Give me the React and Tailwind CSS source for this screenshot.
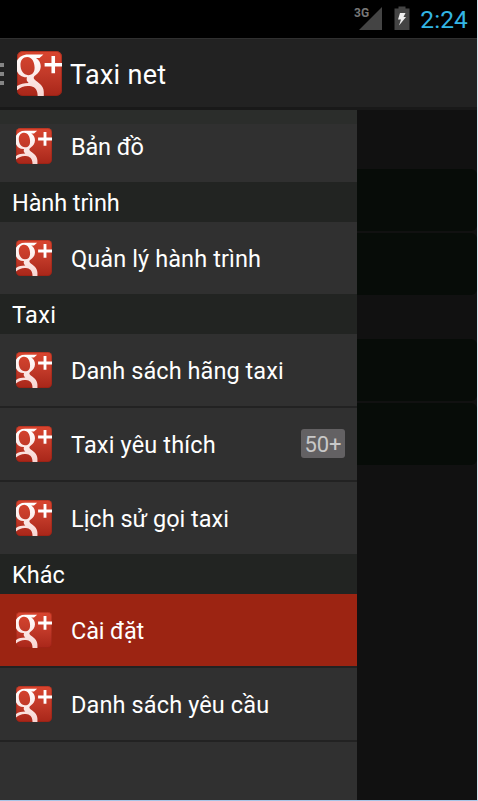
import { useId } from "react";

function GPlus({ className }) {
  const id = useId();
  return (
    <svg viewBox="0 0 44 44" className={className}>
      <defs>
        <linearGradient id={id} x1="0" y1="0" x2="0" y2="1">
          <stop offset="0" stopColor="#d9452f" />
          <stop offset="0.5" stopColor="#c23a29" />
          <stop offset="1" stopColor="#a82619" />
        </linearGradient>
        <linearGradient id={id + "w"} x1="0" y1="0" x2="0" y2="1">
          <stop offset="0" stopColor="#fff" />
          <stop offset="1" stopColor="#f8d5d1" />
        </linearGradient>
        <clipPath id={id + "c"}>
          <rect width="44" height="44" rx="5.5" />
        </clipPath>
      </defs>
      <g clipPath={`url(#${id}c)`}>
        <rect width="44" height="44" fill={`url(#${id})`} />
        <rect x="0.5" y="0.5" width="43" height="43" rx="5" fill="none" stroke="#8a1d12" strokeOpacity="0.5" />
        <path
          fill={`url(#${id}w)`}
          fillRule="evenodd"
          d="M11 3.5H25.8L22 6.8H18.6C21.8 8.8 23.2 11.8 23.2 15C23.2 19.2 20.8 21.8 18.4 23.4C16.2 24.9 15.6 26.2 17.4 28C20 30.4 26.2 33.2 26.2 40V44H20.2C20.2 38.5 18 35.4 13.8 34.5C8.8 33.4 4 34.8 0 38.4V34.2C3 32.2 7 31.4 11.4 31.3C9.4 29.5 9 27.8 9.8 25.7C5 26 1.6 23.4 0 19.8V9.5C2 6 5.6 3.5 11 3.5ZM10 5.8C5.8 5.8 3.4 9 3.4 13.5C3.4 18.8 6.2 23.6 11 23.6C15.2 23.6 17.2 20.8 17.2 16.4C17.2 11 14.8 5.8 10 5.8Z"
        />
        <path fill="#fff" d="M33.7 5H37.2V11.7H44V15.2H37.2V21.8H33.7V15.2H27V11.7H33.7Z" />
      </g>
    </svg>
  );
}

function Header({ children, track }) {
  return (
    <div className={`flex h-10 shrink-0 items-center bg-[#222422] pl-3 pt-1 text-[23.5px] whitespace-nowrap ${track}`}>
      {children}
    </div>
  );
}

function Row({ label, track, badge, active, divider }) {
  return (
    <>
      <div className={`flex h-18 shrink-0 items-center pl-4 pr-3 ${active ? "bg-[#9c2412]" : ""}`}>
        <GPlus className="size-9 shrink-0" />
        <span className={`ml-[19px] pt-1 text-[23.5px] whitespace-nowrap ${track}`}>{label}</span>
        {badge && (
          <span className="mb-px ml-auto flex h-[29px] w-11 items-center justify-center rounded-[3px] bg-[#636163] pt-0.5 text-[22px] text-[#c8c8c8]">
            {badge}
          </span>
        )}
      </div>
      {divider && <div className="h-0.5 shrink-0 bg-[#222222]" />}
    </>
  );
}

function Card({ className }) {
  return <div className={`shrink-0 rounded-r-md bg-[#070c08] ${className}`} />;
}

export default function App() {
  return (
    <div className="h-[801px] w-[478px] overflow-hidden border-r border-b border-r-[#d3e3ef] border-b-[#a9c4e6] bg-[#111111] font-['Roboto','Noto_Sans',sans-serif] text-white">
      <div className="flex h-[38px] items-start justify-end bg-black pr-[9px]">
        <svg viewBox="0 0 28 28" className="mt-[5px] h-7 w-7">
          <path d="M27 2V25H4Z" fill="#444" />
        </svg>
        <svg viewBox="0 0 16 24" className="mt-[6px] ml-[11px] h-6 w-4">
          <path d="M4.5 0.5H11.5V2.5H15.5V24H0.5V2.5H4.5Z" fill="#444" />
          <path d="M6 7H11.5L9.5 11H12L5 19.5L7 13.5H4Z" fill="#eee" />
        </svg>
        <span className="ml-[9px] w-[49px] pt-[6px] text-right text-[24.5px] leading-7 tracking-[0.1px] text-[#33b5e5]">2:24</span>
      </div>
      <span className="absolute top-[5px] left-[354px] text-[12px] leading-4 font-bold text-[#777]">3G</span>
      <div className="flex h-[72px] items-center border-t border-b-3 border-t-[#303030] border-b-[#191919] bg-[#222222]">
        <div className="flex w-1 flex-col gap-[5px] pt-0.5">
          <i className="h-1 bg-[#858585]" />
          <i className="h-1 bg-[#858585]" />
          <i className="h-1 bg-[#858585]" />
        </div>
        <GPlus className="ml-[13px] size-[45px]" />
        <span className="ml-2 pt-1 text-[27px] tracking-[0.3px] whitespace-nowrap">Taxi net</span>
      </div>
      <div className="flex h-[690px]">
        <div className="flex w-[357px] shrink-0 flex-col bg-[linear-gradient(to_bottom,#2b2d2b_14px,#303030_14px)]">
          <Row label="Bản đồ" track="tracking-[-0.15px]" />
          <Header track="tracking-[-0.1px]">Hành trình</Header>
          <Row label="Quản lý hành trình" track="tracking-[0.1px]" />
          <Header track="tracking-[0.35px]">Taxi</Header>
          <Row label="Danh sách hãng taxi" track="tracking-[0.06px]" divider />
          <Row label="Taxi yêu thích" track="tracking-[0.16px]" badge="50+" divider />
          <Row label="Lịch sử gọi taxi" track="tracking-normal" />
          <Header track="tracking-normal">Khác</Header>
          <Row label="Cài đặt" track="tracking-[-0.15px]" active divider />
          <Row label="Danh sách yêu cầu" track="tracking-[0.12px]" divider />
        </div>
        <div className="flex flex-1 flex-col pt-[59px]">
          <Card className="h-[62px]" />
          <Card className="mt-0.5 h-[62px]" />
          <Card className="mt-11 h-[62px]" />
          <Card className="mt-0.5 h-[62px]" />
        </div>
      </div>
    </div>
  );
}
